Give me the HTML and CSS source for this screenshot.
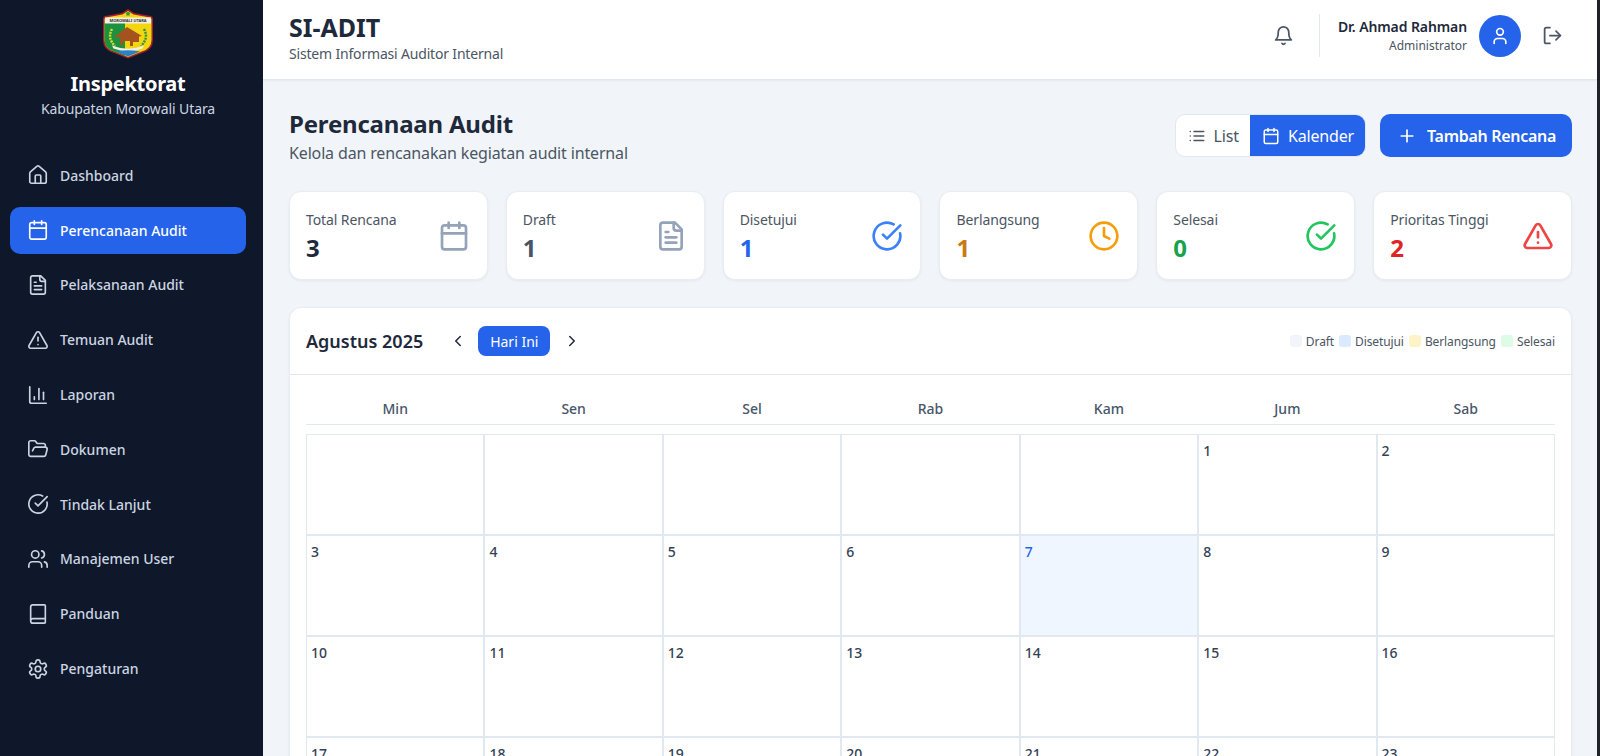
FILE: index.html
```html
<!DOCTYPE html>
<html lang="id">
<head>
  <meta charset="UTF-8" />
  <meta name="viewport" content="width=device-width, initial-scale=1" />
  <title>SI-ADIT - Perencanaan Audit</title>
  <link rel="stylesheet" href="styles.css">
</head>
<body>
  <svg class="icon-defs" aria-hidden="true">
    <symbol id="i-house" viewBox="0 0 24 24"><path d="M15 21v-8a1 1 0 0 0-1-1h-4a1 1 0 0 0-1 1v8"/><path d="M3 10a2 2 0 0 1 .709-1.528l7-5.999a2 2 0 0 1 2.582 0l7 5.999A2 2 0 0 1 21 10v9a2 2 0 0 1-2 2H5a2 2 0 0 1-2-2z"/></symbol>
    <symbol id="i-calendar" viewBox="0 0 24 24"><path d="M8 2v4"/><path d="M16 2v4"/><rect x="3" y="4" width="18" height="18" rx="2"/><path d="M3 10h18"/></symbol>
    <symbol id="i-file" viewBox="0 0 24 24"><path d="M15 2H6a2 2 0 0 0-2 2v16a2 2 0 0 0 2 2h12a2 2 0 0 0 2-2V7Z"/><path d="M14 2v4a2 2 0 0 0 2 2h4"/><path d="M10 9H8"/><path d="M16 13H8"/><path d="M16 17H8"/></symbol>
    <symbol id="i-alert" viewBox="0 0 24 24"><path d="m21.73 18-8-14a2 2 0 0 0-3.48 0l-8 14A2 2 0 0 0 4 21h16a2 2 0 0 0 1.73-3"/><path d="M12 9v4"/><path d="M12 17h.01"/></symbol>
    <symbol id="i-chart" viewBox="0 0 24 24"><path d="M3 3v16a2 2 0 0 0 2 2h16"/><path d="M18 17V9"/><path d="M13 17V5"/><path d="M8 17v-3"/></symbol>
    <symbol id="i-folder" viewBox="0 0 24 24"><path d="m6 14 1.5-2.9A2 2 0 0 1 9.24 10H20a2 2 0 0 1 1.94 2.5l-1.54 6a2 2 0 0 1-1.95 1.5H4a2 2 0 0 1-2-2V5a2 2 0 0 1 2-2h3.9a2 2 0 0 1 1.69.9l.81 1.2a2 2 0 0 0 1.67.9H18a2 2 0 0 1 2 2v2"/></symbol>
    <symbol id="i-check" viewBox="0 0 24 24"><path d="M21.801 10A10 10 0 1 1 17 3.335"/><path d="m9 11 3 3L22 4"/></symbol>
    <symbol id="i-users" viewBox="0 0 24 24"><path d="M16 21v-2a4 4 0 0 0-4-4H6a4 4 0 0 0-4 4v2"/><circle cx="9" cy="7" r="4"/><path d="M22 21v-2a4 4 0 0 0-3-3.87"/><path d="M16 3.13a4 4 0 0 1 0 7.75"/></symbol>
    <symbol id="i-book" viewBox="0 0 24 24"><path d="M4 19.5v-15A2.5 2.5 0 0 1 6.5 2H19a1 1 0 0 1 1 1v18a1 1 0 0 1-1 1H6.5a1 1 0 0 1 0-5H20"/></symbol>
    <symbol id="i-gear" viewBox="0 0 24 24"><path d="M12.22 2h-.44a2 2 0 0 0-2 2v.18a2 2 0 0 1-1 1.73l-.43.25a2 2 0 0 1-2 0l-.15-.08a2 2 0 0 0-2.73.73l-.22.38a2 2 0 0 0 .73 2.73l.15.1a2 2 0 0 1 1 1.72v.51a2 2 0 0 1-1 1.74l-.15.09a2 2 0 0 0-.73 2.73l.22.38a2 2 0 0 0 2.73.73l.15-.08a2 2 0 0 1 2 0l.43.25a2 2 0 0 1 1 1.73V20a2 2 0 0 0 2 2h.44a2 2 0 0 0 2-2v-.18a2 2 0 0 1 1-1.73l.43-.25a2 2 0 0 1 2 0l.15.08a2 2 0 0 0 2.73-.73l.22-.39a2 2 0 0 0-.73-2.73l-.15-.08a2 2 0 0 1-1-1.74v-.5a2 2 0 0 1 1-1.74l.15-.09a2 2 0 0 0 .73-2.73l-.22-.38a2 2 0 0 0-2.73-.73l-.15.08a2 2 0 0 1-2 0l-.43-.25a2 2 0 0 1-1-1.73V4a2 2 0 0 0-2-2z"/><circle cx="12" cy="12" r="3"/></symbol>
    <symbol id="i-bell" viewBox="0 0 24 24"><path d="M6 8a6 6 0 0 1 12 0c0 7 3 9 3 9H3s3-2 3-9"/><path d="M10.3 21a1.94 1.94 0 0 0 3.4 0"/></symbol>
    <symbol id="i-user" viewBox="0 0 24 24"><path d="M19 21v-2a4 4 0 0 0-4-4H9a4 4 0 0 0-4 4v2"/><circle cx="12" cy="7" r="4"/></symbol>
    <symbol id="i-logout" viewBox="0 0 24 24"><path d="M9 21H5a2 2 0 0 1-2-2V5a2 2 0 0 1 2-2h4"/><path d="m16 17 5-5-5-5"/><path d="M21 12H9"/></symbol>
    <symbol id="i-list" viewBox="0 0 24 24"><path d="M3 12h.01"/><path d="M3 18h.01"/><path d="M3 6h.01"/><path d="M8 12h13"/><path d="M8 18h13"/><path d="M8 6h13"/></symbol>
    <symbol id="i-plus" viewBox="0 0 24 24"><path d="M5 12h14"/><path d="M12 5v14"/></symbol>
    <symbol id="i-left" viewBox="0 0 24 24"><path d="m15 18-6-6 6-6"/></symbol>
    <symbol id="i-right" viewBox="0 0 24 24"><path d="m9 18 6-6-6-6"/></symbol>
    <symbol id="i-clock" viewBox="0 0 24 24"><circle cx="12" cy="12" r="10"/><path d="M12 6v6l4 2"/></symbol>
  </svg>

  <div class="app">
    <aside class="sidebar">
      <div class="brand">
        <svg class="brand-logo" viewBox="0 0 50 50" role="img" aria-label="Logo Kabupaten Morowali Utara">
          <path d="M25 0 L31 4 L48 7 Q50 7.500 50 10 V31 Q50 41 39 44 L25 49.500 L11 44 Q0 41 0 31 V10 Q0 7.500 2 7 L19 4 Z" fill="#a51e2b"/>
          <path d="M25 2 L30.500 5.500 L47 8.500 Q48.500 9 48.500 10.500 V31 Q48.500 40 38 42.800 L25 48 L12 42.800 Q1.500 40 1.500 31 V10.500 Q1.500 9 3 8.500 L19.500 5.500 Z" fill="#f3d611"/>
          <path d="M1.500 14 V31 Q1.500 40 12 42.800 L22 46.800 V14 Z" fill="#1d9140"/>
          <rect x="2" y="8.500" width="46" height="6" fill="#f2f0e6"/>
          <text x="25" y="13.200" text-anchor="middle" class="logo-text">MOROWALI UTARA</text>
          <path d="M23 4 L25 2.500 L27 4 L26.500 6.500 H23.500 Z" fill="#3a9a3f"/>
          <path d="M9 20 Q4 29 12 37" fill="none" stroke="#d7e12a" stroke-width="2.400" stroke-dasharray="2 1"/>
          <path d="M41 20 Q46 29 38 37" fill="none" stroke="#2f9440" stroke-width="2.400" stroke-dasharray="2 1"/>
          <path d="M24 18 L39 27 L36 27.500 V33 H30 V37 H27 V32 H20 V36 H17 V28 L11 28.500 Z" fill="#a5521f"/>
          <path d="M9 36.500 Q25 43 41 36.500 L39.500 39.500 Q25 45 10.500 39.500 Z" fill="#f2f0e6"/>
          <path d="M13 42.500 Q25 40 37 42.500 L25 47.500 Z" fill="#2b80c6"/>
        </svg>
        <h2 class="brand-name">Inspektorat</h2>
        <p class="brand-sub">Kabupaten Morowali Utara</p>
      </div>
      <nav class="nav">
        <a class="nav-item" href="#"><svg class="icon"><use href="#i-house"/></svg>Dashboard</a>
        <a class="nav-item active" href="#"><svg class="icon"><use href="#i-calendar"/></svg>Perencanaan Audit</a>
        <a class="nav-item" href="#"><svg class="icon"><use href="#i-file"/></svg>Pelaksanaan Audit</a>
        <a class="nav-item" href="#"><svg class="icon"><use href="#i-alert"/></svg>Temuan Audit</a>
        <a class="nav-item" href="#"><svg class="icon"><use href="#i-chart"/></svg>Laporan</a>
        <a class="nav-item" href="#"><svg class="icon"><use href="#i-folder"/></svg>Dokumen</a>
        <a class="nav-item" href="#"><svg class="icon"><use href="#i-check"/></svg>Tindak Lanjut</a>
        <a class="nav-item" href="#"><svg class="icon"><use href="#i-users"/></svg>Manajemen User</a>
        <a class="nav-item" href="#"><svg class="icon"><use href="#i-book"/></svg>Panduan</a>
        <a class="nav-item" href="#"><svg class="icon"><use href="#i-gear"/></svg>Pengaturan</a>
      </nav>
    </aside>

    <div class="main">
      <header class="topbar">
        <div class="topbar-left">
          <h1 class="app-title">SI-ADIT</h1>
          <p class="app-sub">Sistem Informasi Auditor Internal</p>
        </div>
        <div class="topbar-right">
          <svg class="icon bell"><use href="#i-bell"/></svg>
          <div class="user">
            <div class="user-text">
              <div class="user-name">Dr. Ahmad Rahman</div>
              <div class="user-role">Administrator</div>
            </div>
            <div class="avatar"><svg class="icon"><use href="#i-user"/></svg></div>
            <svg class="icon logout"><use href="#i-logout"/></svg>
          </div>
        </div>
      </header>

      <main class="content">
        <section class="page-head">
          <div>
            <h2 class="page-title">Perencanaan Audit</h2>
            <p class="page-sub">Kelola dan rencanakan kegiatan audit internal</p>
          </div>
          <div class="page-actions">
            <div class="toggle">
              <button class="toggle-btn" type="button"><svg class="icon"><use href="#i-list"/></svg>List</button>
              <button class="toggle-btn on" type="button"><svg class="icon"><use href="#i-calendar"/></svg>Kalender</button>
            </div>
            <button class="btn-add" type="button"><svg class="icon"><use href="#i-plus"/></svg>Tambah Rencana</button>
          </div>
        </section>

        <section class="stats">
          <div class="stat"><div class="stat-text"><div class="stat-label">Total Rencana</div><div class="stat-num c-slate">3</div></div><svg class="icon stat-icon i-gray"><use href="#i-calendar"/></svg></div>
          <div class="stat"><div class="stat-text"><div class="stat-label">Draft</div><div class="stat-num c-gray">1</div></div><svg class="icon stat-icon i-gray"><use href="#i-file"/></svg></div>
          <div class="stat"><div class="stat-text"><div class="stat-label">Disetujui</div><div class="stat-num c-blue">1</div></div><svg class="icon stat-icon i-blue"><use href="#i-check"/></svg></div>
          <div class="stat"><div class="stat-text"><div class="stat-label">Berlangsung</div><div class="stat-num c-amber">1</div></div><svg class="icon stat-icon i-amber"><use href="#i-clock"/></svg></div>
          <div class="stat"><div class="stat-text"><div class="stat-label">Selesai</div><div class="stat-num c-green">0</div></div><svg class="icon stat-icon i-green"><use href="#i-check"/></svg></div>
          <div class="stat"><div class="stat-text"><div class="stat-label">Prioritas Tinggi</div><div class="stat-num c-red">2</div></div><svg class="icon stat-icon i-red"><use href="#i-alert"/></svg></div>
        </section>

        <section class="calendar">
          <div class="cal-head">
            <div class="cal-nav">
              <h3 class="cal-title">Agustus 2025</h3>
              <svg class="icon chev"><use href="#i-left"/></svg>
              <button class="today" type="button">Hari Ini</button>
              <svg class="icon chev"><use href="#i-right"/></svg>
            </div>
            <div class="legend">
              <span class="legend-item"><i class="dot d-draft"></i>Draft</span>
              <span class="legend-item"><i class="dot d-ok"></i>Disetujui</span>
              <span class="legend-item"><i class="dot d-run"></i>Berlangsung</span>
              <span class="legend-item"><i class="dot d-done"></i>Selesai</span>
            </div>
          </div>
          <div class="cal-body">
            <div class="weekdays">
              <div>Min</div><div>Sen</div><div>Sel</div><div>Rab</div><div>Kam</div><div>Jum</div><div>Sab</div>
            </div>
            <div class="days">
              <div class="day"></div><div class="day"></div><div class="day"></div><div class="day"></div><div class="day"></div><div class="day">1</div><div class="day">2</div>
              <div class="day">3</div><div class="day">4</div><div class="day">5</div><div class="day">6</div><div class="day now">7</div><div class="day">8</div><div class="day">9</div>
              <div class="day">10</div><div class="day">11</div><div class="day">12</div><div class="day">13</div><div class="day">14</div><div class="day">15</div><div class="day">16</div>
              <div class="day">17</div><div class="day">18</div><div class="day">19</div><div class="day">20</div><div class="day">21</div><div class="day">22</div><div class="day">23</div>
              <div class="day">24</div><div class="day">25</div><div class="day">26</div><div class="day">27</div><div class="day">28</div><div class="day">29</div><div class="day">30</div>
              <div class="day">31</div><div class="day"></div><div class="day"></div><div class="day"></div><div class="day"></div><div class="day"></div><div class="day"></div>
            </div>
          </div>
        </section>
      </main>
    </div>
  </div>
</body>
</html>
```

FILE: styles.css
```css
:root {
  --font-sans: 'Noto Sans', 'Open Sans', sans-serif;
  --color-navy: #0f172a;
  --color-primary: #2563eb;
  --color-bg: #f1f5f9;
  --color-line: #e2e8f0;
  --color-text: #1e293b;
  --color-muted: #4b5563;
}

* {
  box-sizing: border-box;
}

html,
body {
  height: 100%;
}

body {
  margin: 0;
  font-family: var(--font-sans);
  color: var(--color-text);
  background: #1f2328;
  overflow: hidden;
}

h1, h2, h3, p {
  margin: 0;
}

.icon-defs {
  display: none;
}

.icon {
  width: 20px;
  height: 20px;
  flex-shrink: 0;
  fill: none;
  stroke: currentColor;
  stroke-width: 2;
  stroke-linecap: round;
  stroke-linejoin: round;
}

.app {
  display: flex;
  height: 100vh;
  margin-right: 3px;
}

/* sidebar */
.sidebar {
  width: 263px;
  flex-shrink: 0;
  background: var(--color-navy);
  padding: 9px 17px 0 10px;
}

.brand {
  display: flex;
  flex-direction: column;
  align-items: center;
  text-align: center;
}

.brand-logo {
  width: 50px;
  height: 50px;
}

.logo-text {
  font-size: 4px;
  font-weight: 700;
  fill: #333;
}

.brand-name {
  margin-top: 11px;
  font-size: 20px;
  line-height: 28px;
  font-weight: 700;
  letter-spacing: -0.3px;
  color: #fff;
}

.brand-sub {
  margin-top: 1px;
  font-size: 14px;
  line-height: 20px;
  letter-spacing: -0.1px;
  color: #cbd5e1;
}

.nav {
  display: flex;
  flex-direction: column;
  gap: 8px;
  margin-top: 33px;
}

.nav-item {
  display: flex;
  align-items: center;
  gap: 11px;
  height: 46.800px;
  padding: 0 18px 0 17px;
  border-radius: 10px;
  color: #cbd5e1;
  font-size: 14px;
  font-weight: 500;
  text-decoration: none;
}

.nav-item .icon {
  width: 22px;
  height: 22px;
  stroke-width: 1.800;
}

.nav-item.active {
  background: var(--color-primary);
  color: #fff;
}

/* topbar */
.main {
  flex: 1;
  min-width: 0;
  display: flex;
  flex-direction: column;
  background: var(--color-bg);
}

.topbar {
  height: 80px;
  flex-shrink: 0;
  display: flex;
  align-items: center;
  justify-content: space-between;
  padding: 0 34px 8px 26px;
  background: #fff;
  border-bottom: 1px solid var(--color-line);
  box-shadow: 0 1px 2px rgb(0 0 0 / 0.05);
}

.topbar-left {
  margin-top: 4px;
}

.app-title {
  font-size: 25px;
  line-height: 32px;
  font-weight: 700;
}

.app-sub {
  margin-top: 1px;
  font-size: 14px;
  line-height: 20px;
  letter-spacing: -0.18px;
  color: var(--color-muted);
}

.topbar-right {
  display: flex;
  align-items: center;
  gap: 25px;
}

.bell,
.logout {
  width: 21px;
  height: 21px;
  color: #4b5563;
}

.user {
  display: flex;
  align-items: center;
  gap: 12px;
  height: 43px;
  padding-left: 18px;
  border-left: 1px solid var(--color-line);
}

.user-text {
  text-align: right;
}

.user-name {
  font-size: 14px;
  line-height: 20px;
  font-weight: 600;
  letter-spacing: -0.1px;
}

.user-role {
  margin-top: 1px;
  font-size: 12px;
  line-height: 16px;
  color: var(--color-muted);
}

.avatar {
  width: 42px;
  height: 42px;
  border-radius: 50%;
  display: flex;
  align-items: center;
  justify-content: center;
  background: var(--color-primary);
  color: #fff;
}

.logout {
  margin-left: 9px;
}

/* page content */
.content {
  flex: 1;
  min-height: 0;
  overflow: hidden;
  padding: 28px 25px 0 26px;
}

.page-head {
  display: flex;
  align-items: flex-start;
  justify-content: space-between;
}

.page-title {
  font-size: 24px;
  line-height: 32px;
  font-weight: 700;
  letter-spacing: -0.2px;
}

.page-sub {
  margin-top: 1px;
  font-size: 16px;
  line-height: 24px;
  letter-spacing: -0.15px;
  color: var(--color-muted);
}

.page-actions {
  display: flex;
  gap: 14px;
  margin-top: 6px;
}

.toggle {
  display: flex;
  height: 43px;
  background: #fff;
  border: 1px solid var(--color-line);
  border-radius: 10px;
  overflow: hidden;
}

.toggle-btn {
  display: flex;
  align-items: center;
  gap: 8px;
  padding: 0 11px 0 12px;
  border: none;
  background: none;
  font-family: inherit;
  font-size: 16px;
  letter-spacing: -0.15px;
  color: var(--color-muted);
}

.toggle-btn .icon {
  width: 18px;
  height: 18px;
}

.toggle-btn.on {
  background: var(--color-primary);
  color: #fff;
}

.btn-add {
  display: flex;
  align-items: center;
  gap: 10px;
  height: 43px;
  padding: 0 16px 0 17px;
  border: none;
  border-radius: 10px;
  background: var(--color-primary);
  color: #fff;
  font-family: inherit;
  font-size: 16px;
  font-weight: 600;
  letter-spacing: -0.3px;
}

.stats {
  display: grid;
  grid-template-columns: repeat(6, 1fr);
  gap: 18px;
  margin-top: 26px;
}

.stat {
  height: 89px;
  display: flex;
  align-items: center;
  justify-content: space-between;
  padding: 0 17px 0 16px;
  background: #fff;
  border: 1px solid #e8edf3;
  border-radius: 12px;
  box-shadow: 0 1px 3px rgb(0 0 0 / 0.06);
}

.stat-text {
  padding-top: 2px;
}

.stat-label {
  font-size: 14px;
  line-height: 20px;
  letter-spacing: -0.1px;
  color: var(--color-muted);
}

.stat-num {
  margin-top: 2px;
  font-size: 24px;
  line-height: 32px;
  font-weight: 700;
}

.stat-icon {
  width: 32px;
  height: 32px;
}

.c-slate { color: #1e293b; }
.c-gray { color: #475569; }
.c-blue { color: #2563eb; }
.c-amber { color: #ca7a12; }
.c-green { color: #16a34a; }
.c-red { color: #dc2626; }

.i-gray { color: #94a3b8; }
.i-blue { color: #3b82f6; }
.i-amber { color: #f59e0b; }
.i-green { color: #22c55e; }
.i-red { color: #ef4444; }

/* calendar */
.calendar {
  margin-top: 27px;
  background: #fff;
  border: 1px solid #e8edf3;
  border-radius: 12px;
  box-shadow: 0 1px 3px rgb(0 0 0 / 0.06);
}

.cal-head {
  height: 67px;
  display: flex;
  align-items: center;
  justify-content: space-between;
  padding: 0 16px;
  border-bottom: 1px solid var(--color-line);
}

.cal-nav {
  display: flex;
  align-items: center;
}

.cal-title {
  font-size: 18px;
  font-weight: 600;
  margin-right: 26px;
}

.chev {
  width: 18px;
  height: 18px;
  color: #1e293b;
}

.today {
  height: 30px;
  width: 72px;
  margin: 0 13px 0 11px;
  border: none;
  border-radius: 8px;
  background: var(--color-primary);
  color: #fff;
  font-family: inherit;
  font-size: 14px;
}

.legend {
  display: flex;
  gap: 5px;
  font-size: 12px;
  letter-spacing: -0.1px;
  color: var(--color-muted);
}

.legend-item {
  display: flex;
  align-items: center;
  gap: 4px;
}

.dot {
  width: 12px;
  height: 12px;
  border-radius: 3px;
}

.d-draft { background: #f1f5f9; }
.d-ok { background: #dbeafe; }
.d-run { background: #fef3c7; }
.d-done { background: #dcfce7; }

.cal-body {
  padding: 16px;
}

.weekdays {
  display: grid;
  grid-template-columns: repeat(7, 1fr);
  height: 34px;
  padding-top: 8px;
  border-bottom: 1px solid var(--color-line);
  text-align: center;
  font-size: 14px;
  font-weight: 500;
  line-height: 20px;
  color: #475569;
}

.days {
  display: grid;
  grid-template-columns: repeat(7, 1fr);
  margin-top: 9px;
}

.day {
  height: 101px;
  padding: 6px 4px;
  border: 1px solid var(--color-line);
  font-size: 14px;
  line-height: 20px;
  font-weight: 500;
  color: #334155;
}

.day.now {
  background: #eff6ff;
  color: var(--color-primary);
}
```
